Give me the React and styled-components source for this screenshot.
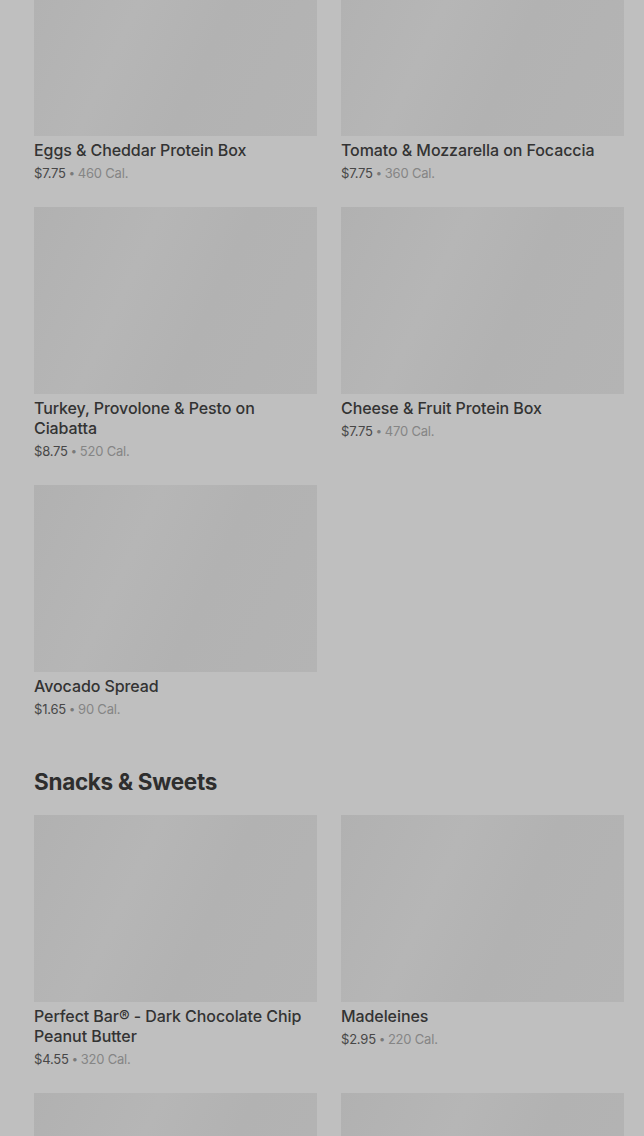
import React from 'react';
import styled, { createGlobalStyle } from 'styled-components';

const sections = [
  {
    title: null,
    items: [
      { name: 'Eggs & Cheddar Protein Box', price: '$7.75', cal: '460 Cal.' },
      { name: 'Tomato & Mozzarella on Focaccia', price: '$7.75', cal: '360 Cal.' },
      { name: 'Turkey, Provolone & Pesto on Ciabatta', price: '$8.75', cal: '520 Cal.' },
      { name: 'Cheese & Fruit Protein Box', price: '$7.75', cal: '470 Cal.' },
      { name: 'Avocado Spread', price: '$1.65', cal: '90 Cal.' },
    ],
  },
  {
    title: 'Snacks & Sweets',
    items: [
      { name: 'Perfect Bar® - Dark Chocolate Chip Peanut Butter', price: '$4.55', cal: '320 Cal.' },
      { name: 'Madeleines', price: '$2.95', cal: '220 Cal.' },
      { name: '', price: '', cal: '' },
      { name: '', price: '', cal: '' },
    ],
  },
];

function App() {
  return (
    <>
      <GlobalStyle />
      <Page>
        {sections.map((section, i) => (
          <Section key={i}>
            {section.title && <Heading>{section.title}</Heading>}
            <Grid>
              {section.items.map((item, j) => (
                <Card key={j}>
                  <Thumb />
                  {item.name && <Name>{item.name}</Name>}
                  {item.price && (
                    <Meta>
                      <Price>{item.price}</Price>
                      <Dot>•</Dot>
                      <Cal>{item.cal}</Cal>
                    </Meta>
                  )}
                </Card>
              ))}
            </Grid>
          </Section>
        ))}
      </Page>
    </>
  );
}

export default App;

const GlobalStyle = createGlobalStyle`
  html, body {
    margin: 0;
    padding: 0;
    background: #bfbfbf;
    overflow: hidden;
  }
  body {
    font-family: Inter, "Noto Sans", sans-serif;
  }
`;

const Page = styled.main`
  padding: 0 20px 0 34px;
  margin-top: -51px;
`;

const Section = styled.section`
  & + & {
    margin-top: 47px;
  }
`;

const Heading = styled.h2`
  margin: 0 0 17px;
  font-size: 22.5px;
  line-height: 32px;
  font-weight: 700;
  color: #2e2e2e;
  letter-spacing: -0.3px;
`;

const Grid = styled.div`
  display: grid;
  grid-template-columns: 283px 283px;
  column-gap: 24px;
  row-gap: 24px;
`;

const Card = styled.div`
  display: flex;
  flex-direction: column;
`;

const Thumb = styled.div`
  height: 187px;
  background: linear-gradient(115deg, #b1b1b1 0%, #b6b6b6 35%, #b2b2b2 60%, #b4b4b4 100%);
  margin-bottom: 4px;
`;

const Name = styled.div`
  font-size: 16px;
  line-height: 20px;
  font-weight: 500;
  letter-spacing: -0.08px;
  color: #333;
`;

const Meta = styled.div`
  margin-top: 3px;
  font-size: 13px;
  line-height: 20px;
  letter-spacing: -0.2px;
  display: flex;
  gap: 3px;
`;

const Price = styled.span`
  color: #474747;
`;

const Dot = styled.span`
  color: #7a7a7a;
  font-size: 11px;
`;

const Cal = styled.span`
  color: #858585;
`;
